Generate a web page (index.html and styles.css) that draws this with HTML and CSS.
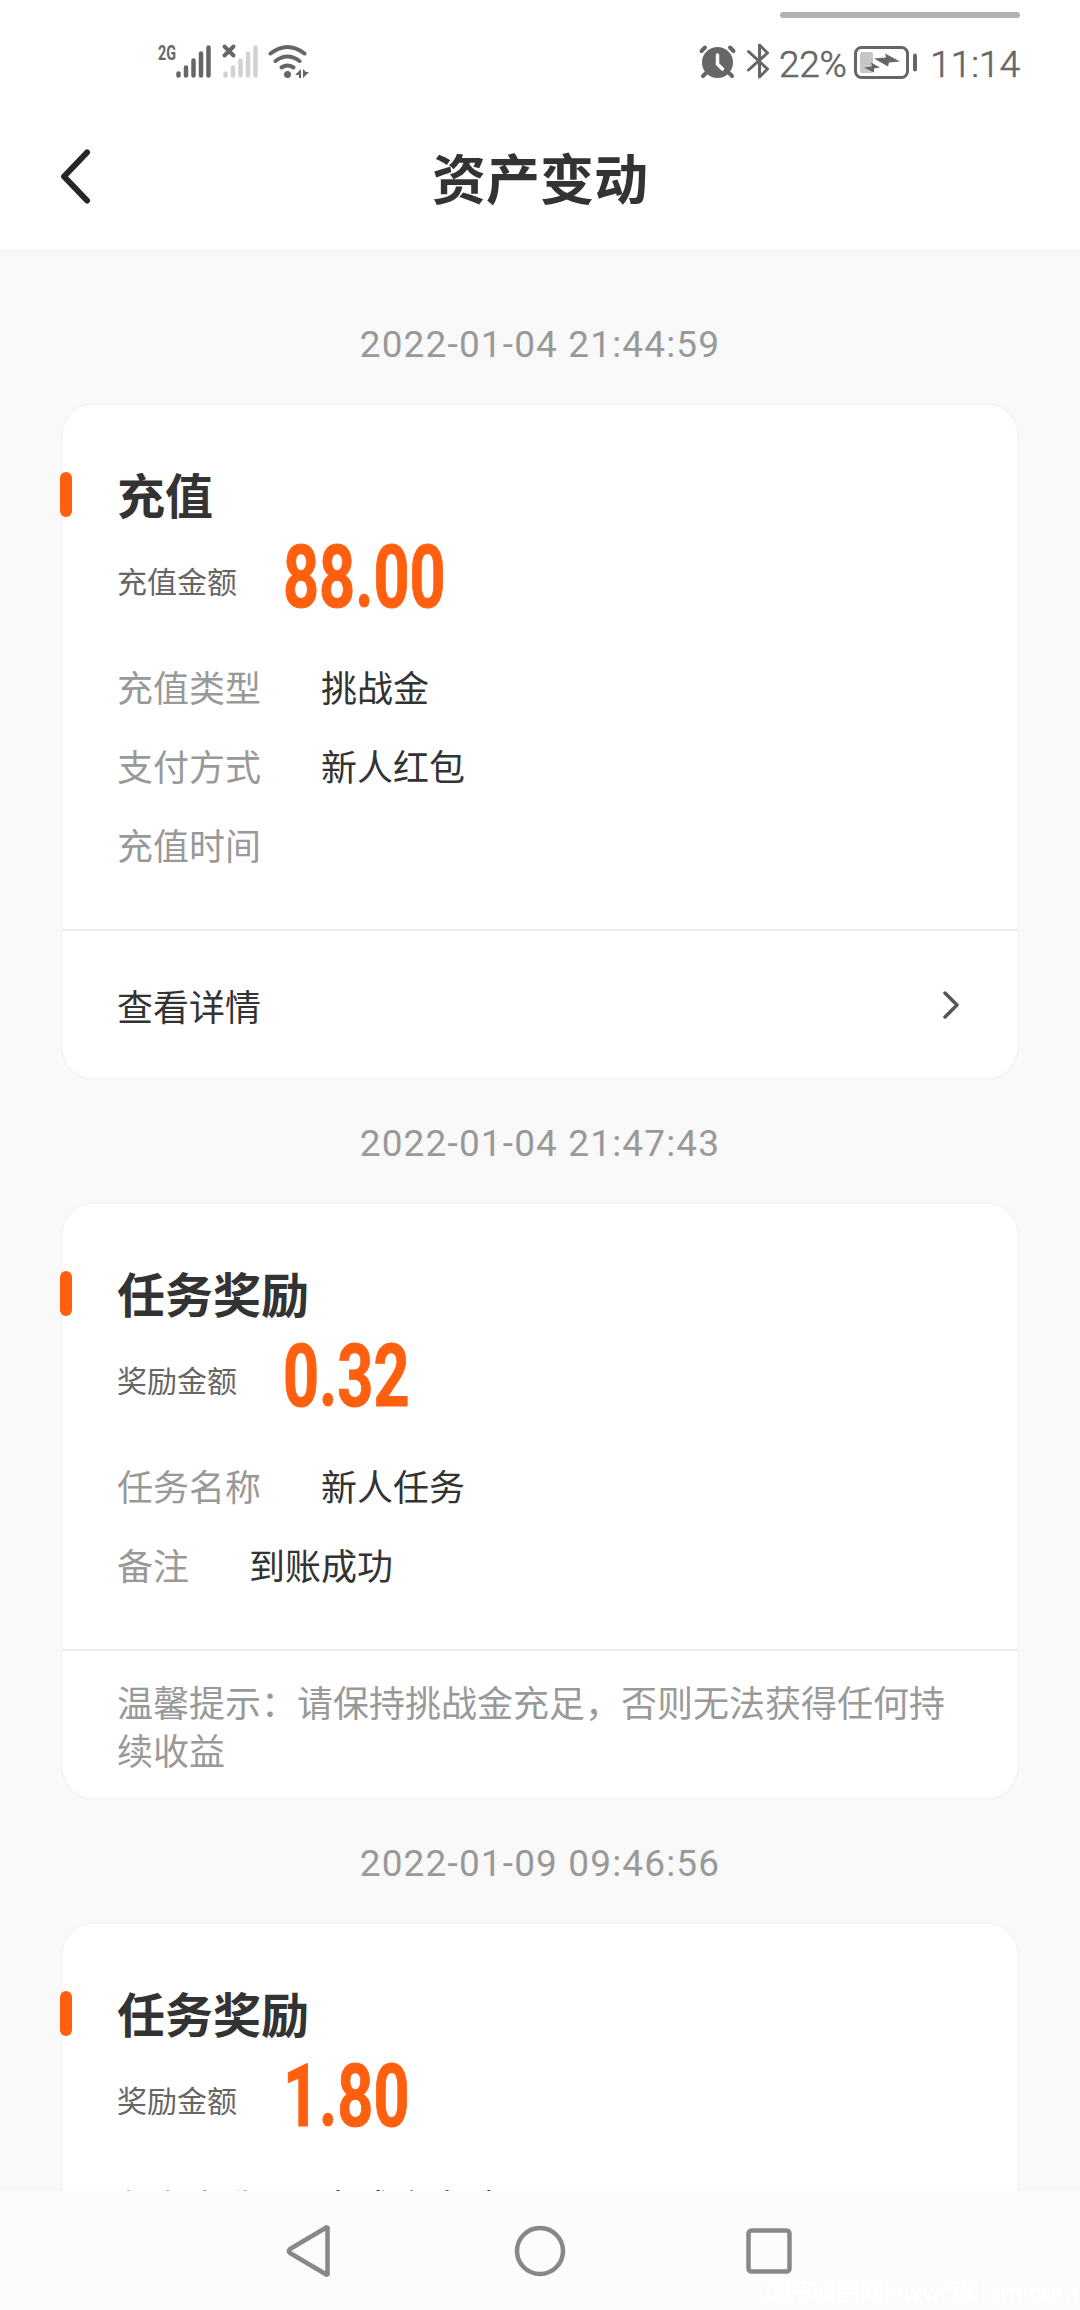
FILE: index.html
```html
<!DOCTYPE html>
<html lang="zh-CN">
<head>
<meta charset="utf-8">
<title>资产变动</title>
<link rel="stylesheet" href="styles.css">
</head>
<body>
<div class="screen">
  <header class="status">
    <svg class="status-left" width="160" height="40" viewBox="150 40 160 40">
      <text class="net" x="158" y="60" textLength="18" lengthAdjust="spacingAndGlyphs">2G</text>
      <g class="bars"><path d="M178.500 73.500v2M186 67.500v8M193.500 60.500v15M201 53.500v22M208.500 47.500v28"/></g>
      <g class="bars faint"><path d="M225.500 73.500v2M233 67.500v8M240.500 60.500v15M248 53.500v22M255.500 47.500v28"/></g>
      <path class="line" d="M224.500 46.500l9 9M233.500 46.500l-9 9"/>
      <path class="line" d="M270.500 53.500q17-13 34 0M275.500 61q12-9 24 0M281.500 67.500q6-4 12 0"/>
      <circle class="fill" cx="287.500" cy="74.500" r="3.500"/>
      <path class="fill" d="M301 69v9h-2v-3h-4zM303 69v9l6-6h-3z"/>
    </svg>
    <div class="status-right">
      <svg width="76" height="40" viewBox="698 40 76 40">
        <path class="line" d="M701.500 51l3.500-3.500M733.500 51l-3.500-3.500M706 73l-3 3M729 73l3 3"/>
        <circle class="fill" cx="717.500" cy="62.500" r="15.500"/>
        <path class="hand" d="M717.500 55v9l5 5"/>
        <path class="line thin" d="M748.500 51.500l19 17.500-8 8V45l8 8-19 17"/>
      </svg>
      <span class="pct">22%</span>
      <svg class="battery" width="66" height="36" viewBox="853 45 66 36">
        <rect class="level" x="860" y="52" width="13" height="21" rx="2"/>
        <rect class="line thin" x="855.500" y="47.500" width="52" height="30" rx="6"/>
        <path class="line" d="M915 55.500v14"/>
        <path class="fill" d="M874 58.500l12-1-1-4 15 8-11 1-1 4zM864 67.500l8-1-1-4 9 5-6 1 0 4z"/>
      </svg>
      <span class="clock">11:14</span>
    </div>
    <i class="pull"></i>
  </header>
  <nav class="titlebar">
    <svg class="back" width="36" height="60" viewBox="0 0 36 60"><path d="M31 5.500L8 29.500 31 53.500"/></svg>
    <h1>资产变动</h1>
  </nav>
  <main class="feed">
    <time>2022-01-04 21:44:59</time>
    <section class="card">
      <div class="body">
        <h2>充值</h2>
        <div class="amount"><span>充值金额</span><b>88.00</b></div>
        <dl>
          <div><dt>充值类型</dt><dd>挑战金</dd></div>
          <div><dt>支付方式</dt><dd>新人红包</dd></div>
          <div><dt>充值时间</dt><dd></dd></div>
        </dl>
      </div>
      <div class="more"><span>查看详情</span><svg width="20" height="32" viewBox="0 0 20 32"><path d="M4 4l12 12L4 28"/></svg></div>
    </section>
    <time>2022-01-04 21:47:43</time>
    <section class="card">
      <div class="body">
        <h2>任务奖励</h2>
        <div class="amount"><span>奖励金额</span><b>0.32</b></div>
        <dl>
          <div><dt>任务名称</dt><dd>新人任务</dd></div>
          <div><dt>备注</dt><dd>到账成功</dd></div>
        </dl>
      </div>
      <p class="tip">温馨提示：请保持挑战金充足，否则无法获得任何持续收益</p>
    </section>
    <time>2022-01-09 09:46:56</time>
    <section class="card">
      <div class="body">
        <h2>任务奖励</h2>
        <div class="amount"><span>奖励金额</span><b>1.80</b></div>
        <dl>
          <div><dt>任务名称</dt><dd>完成个人认证</dd></div>
        </dl>
      </div>
    </section>
  </main>
  <footer class="keys">
    <svg width="1080" height="119" viewBox="0 2191 1080 119">
      <path d="M327.500 2229v44a1 1 0 0 1-2 1L290 2253q-2-2 0-4l35.500-21a1 1 0 0 1 2 1z"/>
      <circle cx="540" cy="2251" r="23"/>
      <rect x="748.500" y="2230.500" width="41" height="41" rx="3"/>
    </svg>
    <span class="mark">58好项目网www.58hxm.com</span>
  </footer>
</div>
</body>
</html>
```
FILE: styles.css
```css
* { box-sizing: border-box; margin: 0; padding: 0; }
body { background: #f9f9f9; font-family: Roboto, "Noto Sans CJK SC", sans-serif; color: #333; }
.screen { width: 1080px; height: 2310px; display: flex; flex-direction: column; overflow: hidden; }

.status { position: relative; flex: none; height: 100px; padding: 40px 60px 0 150px; background: #fff; display: flex; justify-content: space-between; color: #666; }
.pull { position: absolute; left: 780px; top: 12px; width: 240px; height: 6px; border-radius: 3px; background: #b1b1b1; }
.status-right { display: flex; height: 48px; font-size: 37px; line-height: 49px; }
.pct { width: 74px; margin-left: 5px; letter-spacing: -.3px; white-space: nowrap; }
.pct, .clock { font-weight: 300; -webkit-text-stroke: .6px #666; }
.battery { margin-top: 5px; }
.clock { width: 101px; text-align: right; white-space: nowrap; }
.net { font: bold 20px Roboto, sans-serif; fill: #666; }
.fill { fill: #666; }
.line { fill: none; stroke: #666; stroke-width: 4; stroke-linecap: round; stroke-linejoin: round; }
.thin { stroke-width: 3; }
.level { fill: #c6c6c6; }
.hand { fill: none; stroke: #fff; stroke-width: 3.500; stroke-linecap: round; }
.bars { fill: none; stroke: #666; stroke-width: 4.500; stroke-linecap: round; }
.faint { stroke: #d2d2d2; }

.titlebar { flex: none; height: 152px; display: grid; grid-template-columns: 120px 1fr 120px; background: #fff; border-bottom: 2px solid #f4f4f4; }
.back { margin: 47px 0 0 56px; fill: none; stroke: #262626; stroke-width: 6; stroke-linecap: round; stroke-linejoin: round; }
h1 { font-size: 54px; line-height: 80px; padding-top: 42px; font-weight: 700; text-align: center; }

.feed { flex: 1; min-height: 0; overflow: hidden; padding: 48px 61px 0; display: flex; flex-direction: column; }
time { flex: none; height: 90px; line-height: 90px; margin-bottom: 13px; font-size: 37px; text-align: center; color: #999; letter-spacing: 1.150px; white-space: nowrap; }
.card { flex: none; margin-bottom: 19px; background: #fff; border: 2px solid #f5f5f5; border-radius: 32px; }
.body { padding: 63px 55px 40px 54px; }
h2 { position: relative; font-size: 48px; line-height: 60px; font-weight: 700; }
h2::before { content: ""; position: absolute; left: -57px; top: 4px; width: 12px; height: 45px; border-radius: 6px; background: #ff6010; }
.amount { display: flex; height: 124px; }
.amount span { width: 166px; padding-top: 33px; font-size: 30px; line-height: 44px; color: #666; }
.amount b { padding-top: 3px; font-size: 88px; line-height: 92px; color: #ff6010; -webkit-text-stroke: 1px #ff6010; transform: scaleX(.715); transform-origin: 0 0; white-space: nowrap; }
dl > div { display: flex; gap: 60px; font-size: 36px; line-height: 54px; height: 79px; padding-top: 11px; }
dt { color: #999; }
.more { height: 149px; padding: 1px 56px 0 54px; border-top: 2px solid #eee; display: flex; align-items: center; justify-content: space-between; font-size: 36px; }
.more svg { fill: none; stroke: #555; stroke-width: 3.500; stroke-linecap: round; stroke-linejoin: round; }
.tip { height: 149px; padding: 30px 54px 0; border-top: 2px solid #eee; font-size: 36px; line-height: 48px; color: #999; }

.keys { position: relative; flex: none; height: 119px; background: #fcfcfc; }
.keys svg { display: block; fill: none; stroke: #888; stroke-width: 4.500; stroke-linejoin: round; }
.mark { position: absolute; right: 2px; bottom: 0; font-size: 25px; line-height: 34px; color: #fff; white-space: nowrap; }
```
